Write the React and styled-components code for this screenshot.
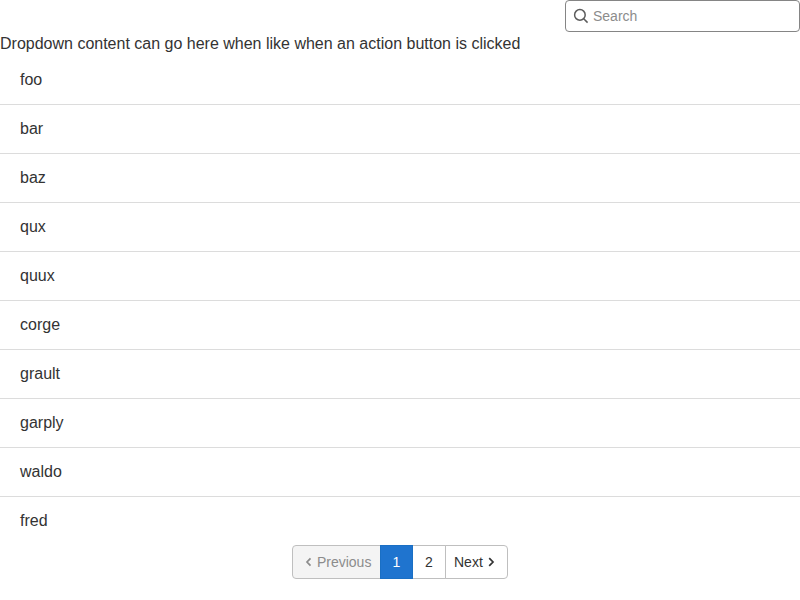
import React from "react";
import styled, { createGlobalStyle } from "styled-components";

const GlobalStyle = createGlobalStyle`
  *, *::before, *::after { box-sizing: border-box; }
  body {
    margin: 0;
    background: #fff;
    color: #333;
    font: 16px/24px "Liberation Sans", Arial, sans-serif;
  }
`;

const Header = styled.header`
  display: flex;
  justify-content: flex-end;
`;

const SearchBox = styled.label`
  display: flex;
  align-items: center;
  gap: 4px;
  width: 235px;
  height: 32px;
  padding: 0 7px;
  border: 1px solid #858585;
  border-radius: 4px;
  color: #5c5c5c;
`;

const SearchInput = styled.input`
  flex: 1;
  min-width: 0;
  padding: 0;
  border: 0;
  outline: 0;
  background: transparent;
  font: 14px/20px "Liberation Sans", Arial, sans-serif;
  color: #333;
  &::placeholder { color: #8c8c8c; opacity: 1; }
`;

const Dropdown = styled.div`
  height: 24px;
`;

const List = styled.ul`
  margin: 0;
  padding: 0;
  list-style: none;
`;

const Item = styled.li`
  height: 49px;
  padding: 12px 20px;
  border-bottom: 1px solid #dcdcdc;
  &:last-child { height: 48px; border-bottom: 0; }
`;

const Pager = styled.nav`
  display: flex;
  justify-content: center;
  height: 34px;
`;

const PageButton = styled.button`
  display: flex;
  align-items: center;
  justify-content: ${(p) => p.$justify || "center"};
  gap: 4px;
  width: ${(p) => p.$width}px;
  height: 34px;
  margin: 0 0 0 -1px;
  padding: 0 ${(p) => (p.$justify ? 8 : 0)}px;
  border: 1px solid ${(p) => (p.$active ? "#1a6fc4" : "#bfbfbf")};
  background: ${(p) => (p.$active ? "#1f74cf" : p.disabled ? "#f4f4f4" : "#fff")};
  color: ${(p) => (p.$active ? "#fff" : p.disabled ? "#8c8c8c" : "#333")};
  font: 14px/20px "Liberation Sans", Arial, sans-serif;
  position: relative;
  z-index: ${(p) => (p.$active ? 1 : 0)};
  &:first-child { margin-left: 0; padding-right: 8.6px; border-radius: 4px 0 0 4px; }
  &:last-child { border-radius: 0 4px 4px 0; }
`;

const items = ["foo", "bar", "baz", "qux", "quux", "corge", "grault", "garply", "waldo", "fred"];

const SearchIcon = () => (
  <svg width="16" height="16" viewBox="0 0 16 16" fill="none" stroke="currentColor" strokeWidth="1.5">
    <circle cx="6.9" cy="6.9" r="5.3" />
    <path d="M10.7 10.7l3.9 3.9" />
  </svg>
);

const Chevron = ({ d }) => (
  <svg width="8" height="10" viewBox="0 0 8 10" fill="none" stroke="currentColor" strokeWidth="1.7">
    <path d={d} />
  </svg>
);

export default function App() {
  return (
    <>
      <GlobalStyle />
      <Header>
        <SearchBox>
          <SearchIcon />
          <SearchInput placeholder="Search" />
        </SearchBox>
      </Header>
      <Dropdown>Dropdown content can go here when like when an action button is clicked</Dropdown>
      <List>{items.map((name) => <Item key={name}>{name}</Item>)}</List>
      <Pager>
        <PageButton disabled $width={89} $justify="flex-end"><Chevron d="M5.5 1.3L2 5l3.5 3.7" />Previous</PageButton>
        <PageButton $active $width={33}>1</PageButton>
        <PageButton $width={34}>2</PageButton>
        <PageButton $width={63} $justify="flex-start">Next<Chevron d="M2.2 1.2L6 5L2.2 8.8" /></PageButton>
      </Pager>
    </>
  );
}
